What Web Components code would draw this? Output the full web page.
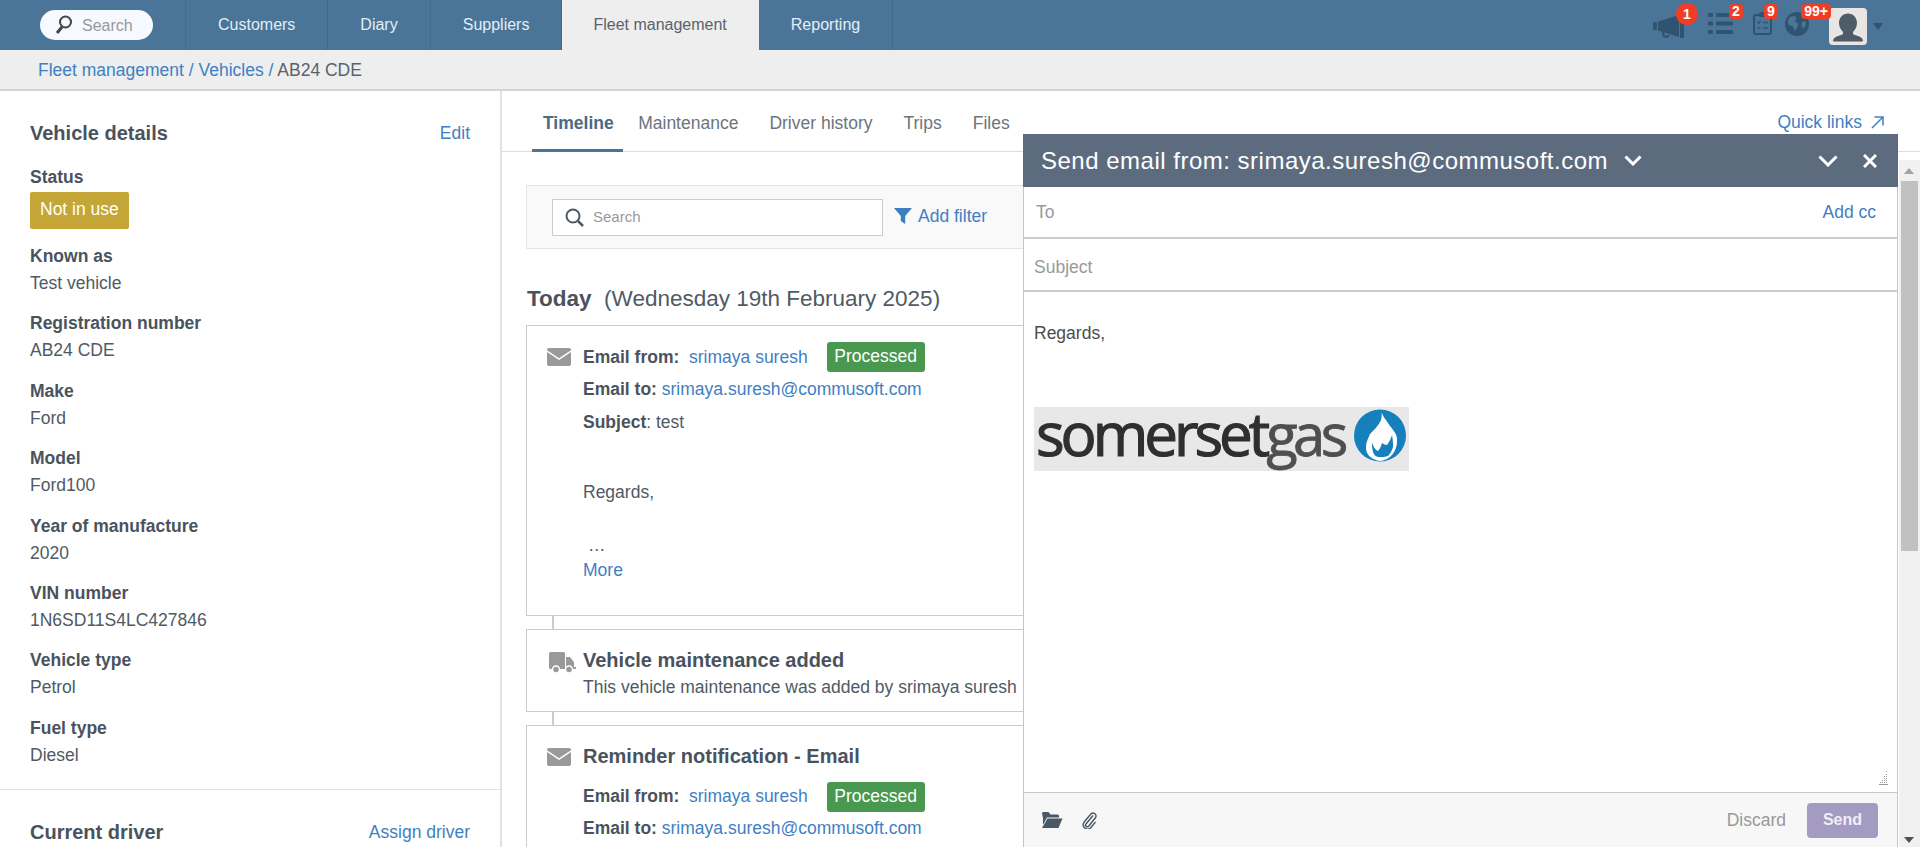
<!DOCTYPE html>
<html lang="en">
<head>
<meta charset="utf-8">
<title>Fleet management</title>
<style>
html,body{margin:0;padding:0;height:100%;overflow:hidden;background:#fff}
body{font:17.5px/1.4 "Liberation Sans",Arial,sans-serif;color:#505a64}
a{color:#3f80c3;text-decoration:none}
b{color:#4a535d}
</style>
</head>
<body>
<x-app>
  <x-top-nav slot="top">
    <x-nav-item>Customers</x-nav-item>
    <x-nav-item>Diary</x-nav-item>
    <x-nav-item>Suppliers</x-nav-item>
    <x-nav-item active>Fleet management</x-nav-item>
    <x-nav-item>Reporting</x-nav-item>
    <x-nav-icon slot="icons" style="--w:31px;--ml:0px;--mt:14px;--bx:23px;--by:-11px;--bw:22px;--bh:22px;--br:11px">1
      <svg slot="icon" width="31" height="24" viewBox="0 0 31 24" fill="#30536f"><path d="M0 8h4v8H0zM5 7.500 26 1v22L5 16.500z"/><rect x="27" y="0" width="4" height="24"/><path d="M9 17.500v2.500a4.200 4.200 0 0 0 8 1.500l-2.300-.8a1.800 1.800 0 0 1-3.400-.7v-2z"/></svg>
    </x-nav-icon>
    <x-nav-icon slot="icons" style="--w:25px;--ml:24px;--mt:12px;--bx:21px;--by:-8px;--bw:14px;--bh:15px;--br:4px">2
      <svg slot="icon" width="25" height="22" viewBox="0 0 25 22" fill="#30536f"><rect y="1" width="5" height="4" rx="1"/><rect x="8" y="1" width="17" height="4" rx="1"/><rect y="9.500" width="5" height="4" rx="1"/><rect x="8" y="9.500" width="17" height="4" rx="1"/><rect y="18" width="5" height="4" rx="1"/><rect x="8" y="18" width="17" height="4" rx="1"/></svg>
    </x-nav-icon>
    <x-nav-icon slot="icons" style="--w:19px;--ml:20px;--mt:11px;--bx:11px;--by:-7px;--bw:14px;--bh:15px;--br:4px">9
      <svg slot="icon" width="19" height="24" viewBox="0 0 19 24" fill="none" stroke="#30536f"><rect x="1" y="4" width="17" height="19" rx="2" stroke-width="2"/><rect x="6" y="1" width="7" height="5" rx="1.500" fill="#30536f" stroke="none"/><path d="M4.500 11l1.200 1.200 2-2.400M10 11.500h5M4.500 17h3M10 17h5" stroke-width="1.500"/></svg>
    </x-nav-icon>
    <x-nav-icon slot="icons" style="--w:24px;--ml:13px;--mt:12px;--bx:16px;--by:-8px;--bw:30px;--bh:15px;--br:4px">99+
      <svg slot="icon" width="24" height="24" viewBox="0 0 24 24"><circle cx="12" cy="12" r="12" fill="#30536f"/><path d="M5 5c3-1 5-1 6 0 1 2-1 3-1 5 2 0 3 1 3 3s-2 4-3 6c-2-2-1-4-3-5-2 0-4-1-4-4 0-2 1-4 2-5zM17 10c1-1 3-1 4 0 0 3-1 5-3 7-1-2-2-5-1-7z" fill="#4a7598"/></svg>
    </x-nav-icon>
    <x-avatar slot="icons"></x-avatar>
  </x-top-nav>
  <x-breadcrumb slot="top"><a href="#">Fleet management / Vehicles /</a> AB24 CDE</x-breadcrumb>

  <x-vehicle-panel slot="side">
    <x-panel-head>Vehicle details<a slot="action" href="#">Edit</a></x-panel-head>
    <x-field status label="Status"><x-status-badge>Not in use</x-status-badge></x-field>
    <x-field label="Known as">Test vehicle</x-field>
    <x-field label="Registration number">AB24 CDE</x-field>
    <x-field label="Make">Ford</x-field>
    <x-field label="Model">Ford100</x-field>
    <x-field label="Year of manufacture">2020</x-field>
    <x-field label="VIN number">1N6SD11S4LC427846</x-field>
    <x-field label="Vehicle type">Petrol</x-field>
    <x-field label="Fuel type">Diesel</x-field>
    <x-panel-head divided>Current driver<a slot="action" href="#">Assign driver</a></x-panel-head>
  </x-vehicle-panel>

  <x-main-view slot="main">
    <x-tab-bar>
      <x-tab active>Timeline</x-tab><x-tab>Maintenance</x-tab><x-tab>Driver history</x-tab><x-tab>Trips</x-tab><x-tab>Files</x-tab>
      <a slot="end" href="#">Quick links</a>
    </x-tab-bar>
    <x-filter-bar></x-filter-bar>
    <x-day-heading><strong>Today</strong>&nbsp; (Wednesday 19th February 2025)</x-day-heading>
    <x-card>
      <x-mail-icon slot="icon"></x-mail-icon>
      <x-row><b>Email from:</b>&nbsp; <a href="#">srimaya suresh</a><x-processed></x-processed></x-row>
      <x-row><b>Email to:</b> <a href="#">srimaya.suresh@commusoft.com</a></x-row>
      <x-row style="margin-top:1px"><b>Subject</b>: test</x-row>
      <x-row style="margin-top:38px">Regards,</x-row>
      <x-row style="margin-top:25px;--lh:24px;padding-left:5px">…</x-row>
      <x-row style="--lh:26px"><a href="#">More</a></x-row>
      <div style="height:32px"></div>
    </x-card>
    <x-link-line></x-link-line>
    <x-card style="--pt:17px">
      <x-truck-icon slot="icon"></x-truck-icon>
      <x-card-title>Vehicle maintenance added</x-card-title>
      <x-row style="--lh:27px">This vehicle maintenance was added by srimaya suresh</x-row>
      <div style="height:10px"></div>
    </x-card>
    <x-link-line></x-link-line>
    <x-card style="--pt:15px">
      <x-mail-icon slot="icon"></x-mail-icon>
      <x-card-title style="--lh:30px">Reminder notification - Email</x-card-title>
      <x-row style="margin-top:9px"><b>Email from:</b>&nbsp; <a href="#">srimaya suresh</a><x-processed></x-processed></x-row>
      <x-row style="margin-top:-1px"><b>Email to:</b> <a href="#">srimaya.suresh@commusoft.com</a></x-row>
      <div style="height:60px"></div>
    </x-card>
  </x-main-view>

  <x-page-scrollbar slot="over"></x-page-scrollbar>
  <x-email-composer slot="over"></x-email-composer>
</x-app>

<script>
function def(name, html, extra){
  const t=document.createElement('template');t.innerHTML=html;
  customElements.define(name,class extends HTMLElement{
    constructor(){super();this.attachShadow({mode:'open'}).appendChild(t.content.cloneNode(true));}
    connectedCallback(){if(extra)extra(this);}
  });
}
def('x-app',`<style>
:host{display:flex;flex-direction:column;height:847px;position:relative;overflow:hidden}
.body{display:flex;flex:1;min-height:0}
</style><slot name="top"></slot><div class="body"><slot name="side"></slot><slot name="main"></slot></div><slot name="over"></slot>`);

def('x-top-nav',`<style>
:host{display:flex;height:50px;background:#4a7598;flex:none}
.s{width:185px;flex:none;border-right:1px solid #41698a;box-sizing:content-box;padding-top:10px}
.pill{margin-left:40px;width:113px;height:30px;border-radius:15px;background:#f6f9ff;display:flex;align-items:center;color:#999;font-size:16px}
.pill span{padding-top:2px}
.pill svg{margin:0 10px 0 15px}
.i{display:flex;margin-left:auto;padding:0 37px 0 0;align-items:flex-start}
</style>
<div class="s"><div class="pill"><svg width="17" height="20" viewBox="0 0 17 20" fill="none" stroke="#444" stroke-width="2"><circle cx="10.500" cy="7" r="5.500"/><path d="M7 12 2 18" stroke-width="3"/></svg><span>Search</span></div></div>
<slot></slot><div class="i"><slot name="icons"></slot></div>`);

def('x-nav-item',`<style>
:host{display:flex;align-items:center;padding:1px 32px 0;border-right:1px solid #41698a;color:#e4edf4;font-size:16px;white-space:nowrap}
:host([active]){background:#eee;color:#59636d;border-right-color:#eee;padding:1px 31px 0}
</style><slot></slot>`);

def('x-nav-icon',`<style>
:host{display:block;position:relative;width:var(--w);margin-left:var(--ml);margin-top:var(--mt);height:26px;font-size:0}
.b{position:absolute;left:var(--bx);top:var(--by);width:var(--bw);height:var(--bh);border-radius:var(--br);background:#f03d26;color:#fff;font:bold 14px/var(--bh) "Liberation Sans",Arial,sans-serif;text-align:center}
</style><slot name="icon"></slot><span class="b"><slot></slot></span>`);

def('x-avatar',`<style>
:host{display:flex;align-items:flex-start;margin-left:20px;margin-top:8px;gap:6px}
.a{width:38px;height:37px;background:#e8e5e3;border-radius:4px;overflow:hidden}
.c{width:0;height:0;margin-top:15px;border:5.500px solid transparent;border-top:7px solid #30536f;border-bottom:0}
</style><div class="a"><svg width="38" height="37" viewBox="0 0 38 37" fill="#4e5b68"><path d="M19 5.500c5 0 9 4 9 9.500 0 4-2 7-4 9v2c3 2 9 2 10 6.500 0 .5-.5 1-1 1H5c-.5 0-1-.5-1-1 1-4.500 7-4.500 10-6.500v-2c-2-2-4-5-4-9 0-5.500 4-9.500 9-9.500z"/></svg></div><div class="c"></div>`);

def('x-breadcrumb',`<style>
:host{display:block;box-sizing:border-box;height:41px;background:#eee;border-bottom:2px solid #d3d6d6;padding:0 0 0 38px;line-height:41px;color:#59636d;flex:none}
</style><slot></slot>`);

def('x-vehicle-panel',`<style>
:host{display:block;width:500px;flex:none;border-right:2px solid #e2e2e2;box-sizing:content-box;margin-right:-1px}
</style><slot></slot>`);

def('x-panel-head',`<style>
:host{display:flex;justify-content:space-between;align-items:center;padding:28px 30px 0;line-height:28px;font-size:20px;font-weight:bold;color:#4a535d}
:host([divided]){border-top:1px solid #e2e2e2;margin-top:6.500px}
::slotted(a){font-size:17.5px;font-weight:normal}
</style><slot></slot><slot name="action"></slot>`);

def('x-field',`<style>
:host{display:block;height:67.400px;padding:0 30px;box-sizing:border-box}
:host([status]){height:65.500px;margin-top:16.500px;margin-bottom:14px}
.l{font-weight:bold;line-height:27px;color:#4a535d}
.v{line-height:27px}
:host([status]) .v{padding-top:1.500px;line-height:0}
</style><div class="l"></div><div class="v"><slot></slot></div>`,el=>{el.shadowRoot.querySelector('.l').textContent=el.getAttribute('label')});

def('x-status-badge',`<style>
:host{display:inline-block;background:#c4a636;color:#fff;height:37px;line-height:34px;padding:0 10px;border-radius:2px}
</style><slot></slot>`);

def('x-main-view',`<style>
:host{display:block;flex:1;min-width:0;padding:0 25px 0 0;box-sizing:border-box}
</style><slot></slot>`);

def('x-tab-bar',`<style>
:host{display:flex;box-sizing:border-box;height:61px;margin-right:-25px;border-bottom:1px solid #ddd;padding-left:31px}
.e{margin-left:auto;padding:21px 36px 0 0;line-height:20px;display:flex;gap:9px;align-items:center;height:20px}
</style><slot></slot><div class="e"><slot name="end"></slot><svg width="13" height="13" viewBox="0 0 13 13" fill="none" stroke="#3f80c3" stroke-width="1.500"><path d="M1 12 12 1M3.500 1H12v8.500"/></svg></div>`);

def('x-tab',`<style>
:host{display:block;box-sizing:border-box;height:61px;padding:21.500px 15.500px 0;line-height:20px;color:#6b747d;white-space:nowrap}
:host([active]){font-weight:bold;color:#4a6a85;border-bottom:3px solid #4a7598;padding:21.500px 9px 0 11px}
</style><slot></slot>`);

def('x-filter-bar',`<style>
:host{display:flex;align-items:center;box-sizing:border-box;height:64px;margin:33px 0 0 25px;background:#f9f9f9;border:1px solid #e5e5e5;padding-left:25px}
.in{width:331px;height:37px;box-sizing:border-box;background:#fff;border:1px solid #ccc;display:flex;align-items:center;color:#999;font-size:15px;padding-left:12px;gap:9px}
.in span{margin-top:-2px}
.f{display:flex;align-items:center;margin-left:11px;color:#3f80c3;gap:6px;margin-top:-2px}
</style><div class="in"><svg width="19" height="19" viewBox="0 0 19 19" fill="none" stroke="#4d5a66" stroke-width="2"><circle cx="8" cy="8" r="6.500"/><path d="M13 13l5 5" stroke-width="2.500"/></svg><span>Search</span></div>
<div class="f"><svg width="18" height="16" viewBox="0 0 18 16" fill="#3a80c1"><path d="M0 0h18l-6.800 8v8l-4.400-3V8z"/></svg><span>Add filter</span></div>`);

def('x-day-heading',`<style>
:host{display:block;margin:35px 0 11px 26px;line-height:30px;font-size:22.500px;color:#505a64;white-space:nowrap}
::slotted(strong){color:#4a535d}
</style><slot></slot>`);

def('x-card',`<style>
:host{display:flex;margin-left:25px;border:1px solid #ccc;box-sizing:border-box;padding-left:20px;padding-top:var(--pt,15px);background:#fff}
.ic{width:36px;flex:none}
.c{flex:1;min-width:0}
</style><div class="ic"><slot name="icon"></slot></div><div class="c"><slot></slot></div>`);

def('x-row',`<style>
:host{display:block;line-height:var(--lh,32px);white-space:nowrap}
</style><slot></slot>`);

def('x-card-title',`<style>
:host{display:block;line-height:var(--lh,27px);font-size:20px;font-weight:bold;color:#4a535d;white-space:nowrap}
</style><slot></slot>`);

def('x-processed',`<style>
:host{display:inline-block;height:30px;line-height:28px;width:98px;text-align:center;margin-left:19px;background:#48994f;color:#fff;border-radius:3px;vertical-align:middle;position:relative;top:-1px}
</style>Processed`);

def('x-mail-icon',`<style>:host{display:block;width:24px;height:18px;padding-top:7px}</style>
<svg width="24" height="18" viewBox="0 0 24 18" style="display:block"><rect width="24" height="18" rx="2" fill="#999"/><path d="M0 3l12 8 12-8" fill="none" stroke="#fff" stroke-width="1.500"/></svg>`);

def('x-truck-icon',`<style>:host{display:block;width:27px;height:22px;padding:5px 0 0 2px}</style>
<svg width="27" height="22" viewBox="0 0 27 22" style="display:block" fill="#999"><path d="M1.500 0h13a1.500 1.500 0 0 1 1.500 1.500V17H1.500A1.500 1.500 0 0 1 0 15.500v-14A1.500 1.500 0 0 1 1.500 0z"/><path d="M17 5h4l4 5v7h-8z"/><rect x="25" y="15" width="2" height="2"/><circle cx="7" cy="17.500" r="3.500" stroke="#fff" stroke-width="1.500"/><circle cx="20" cy="17.500" r="3.500" stroke="#fff" stroke-width="1.500"/></svg>`);

def('x-link-line',`<style>:host{display:block;height:13px;width:2px;background:#ccc;margin-left:51px}</style>`);

def('x-page-scrollbar',`<style>
:host{position:absolute;left:1899px;top:160px;width:21px;height:687px;background:#f1f1f1;display:block}
.u,.d{position:absolute;left:5px;width:0;height:0;border:5px solid transparent}
.u{top:8px;border-top:0;border-bottom:6px solid #a3a3a3}
.d{bottom:4px;border-bottom:0;border-top:6px solid #505050}
.t{position:absolute;left:2px;right:2px;top:21px;height:370px;background:#c1c1c1}
</style><div class="u"></div><div class="t"></div><div class="d"></div>`);

def('x-email-composer',`<style>
:host{position:absolute;left:1023px;top:134px;width:875px;height:713px;display:flex;flex-direction:column;background:#fff;border-left:1px solid #c6c6c6;border-right:1px solid #c6c6c6;box-sizing:border-box;color:#505a64}
.h{height:53px;margin:0 -1px;background:#5d6b7f;color:#fff;display:flex;align-items:center;padding-left:18px;font-size:24px;letter-spacing:.5px;flex:none}
.h svg{flex:none}
.sp{margin-left:auto}
.r{display:flex;align-items:center;justify-content:space-between;box-sizing:border-box;border-bottom:2px solid #ccc;color:#999;flex:none}
.to{height:52px;padding:0 21px 0 12px}
.su{height:53px;padding:5px 10px 0 10px}
.to a{color:#3f80c3;text-decoration:none}
.b{flex:1;position:relative;padding:28px 0 0 10px;min-height:0}
.reg{line-height:26px;color:#4d4d4d}
.logo{display:block;margin-top:61px;width:375px;height:64px;background:#e8e8e8;position:relative}
.lt{height:64px;font:400 60px/64px "Open Sans",sans-serif;letter-spacing:-4px;color:#2f2f2f;-webkit-text-stroke:1.200px #2f2f2f;padding-left:2px;white-space:nowrap;transform:translateY(-6px)}
.lt span{color:#4f4f4f;-webkit-text-stroke:.8px #4f4f4f;font-size:58px;letter-spacing:-4.500px}
.logo svg{position:absolute;left:320px;top:2px}
.grip{position:absolute;right:9px;bottom:7px}
.f{height:55px;background:#f7f7f7;border-top:1px solid #c4c9ce;box-sizing:border-box;display:flex;align-items:center;padding:0 19px 0 18px;flex:none}
.send{width:71px;height:35px;border-radius:4px;background:#a49bc3;color:#f0eef6;font-weight:bold;display:flex;align-items:center;justify-content:center;margin-left:21px;font-size:16px}
.dis{color:#999;margin-left:auto}
.f svg+svg{margin-left:18px}
</style>
<div class="h"><span>Send email from: srimaya.suresh@commusoft.com</span>
<svg style="margin-left:16px" width="18" height="11" viewBox="0 0 18 11" fill="none" stroke="#fff" stroke-width="3"><path d="M1.500 1.500 9 9l7.500-7.500"/></svg>
<svg class="sp" width="20" height="12" viewBox="0 0 20 12" fill="none" stroke="#fff" stroke-width="3"><path d="M1.500 1.500 10 10l8.500-8.500"/></svg>
<svg style="margin:0 21px 0 25px" width="14" height="14" viewBox="0 0 14 14" fill="none" stroke="#fff" stroke-width="3"><path d="M1 1l12 12M13 1 1 13"/></svg></div>
<div class="r to"><span>To</span><a href="#">Add cc</a></div>
<div class="r su"><span>Subject</span></div>
<div class="b"><div class="reg">Regards,</div>
<div class="logo"><div class="lt">somerset<span>gas</span></div>
<svg width="52" height="54" viewBox="0 0 52 54"><circle cx="26" cy="26.500" r="26" fill="#1580bb"/><path d="M27 1c1 6 6 11 9 16 4 5 8 9 7 16 0 8-6 18-17 19-8-1-14-6-14-13 0-6 2-9 4-14 4-4 9-9 11-14 1-4 1-7 0-10z" fill="#fff"/><path d="M18 33c1 4 3 8 6 9 2-2 3-5 4-8 2 1 3 2 5 2 2-3 4-6 5-10 1 5 1 9 1 12-1 4-3 7-5 9-3 1-5 1-8 1-4 0-6-2-7-5-1-3-1-7-1-10z" fill="#1580bb"/></svg></div>
<svg class="grip" width="9" height="14" viewBox="0 0 9 14" fill="#999"><path d="M7 0h1v1H7zM7 3h1v1H7zM5 5h1v1H5zM7 5h1v1H7zM5 7h1v1H5zM7 7h1v1H7zM3 9h1v1H3zM5 9h1v1H5zM7 9h1v1H7zM1 11h1v1H1zM3 11h1v1H3zM5 11h1v1H5zM7 11h1v1H7zM0 13h9v1H0z"/></svg></div>
<div class="f"><svg width="21" height="16" viewBox="0 0 21 16" fill="#4a5866"><path d="M0 1.500A1.500 1.500 0 0 1 1.500 0h5l2 2.500h7A1.500 1.500 0 0 1 17 4v1.500H5L1.500 12 1 12.500V6z" /><path d="M5.500 6.500H20.500L16.500 16H0z"/></svg>
<svg width="17" height="17" viewBox="0 0 17 17" fill="none" stroke="#4a5866" stroke-width="1.400"><path d="M12 3.500 5 12a1.700 1.700 0 0 0 2.600 2.200l7-8.700A3 3 0 0 0 10 1.800L2.800 10.500a4.400 4.400 0 0 0 6.700 5.500l5-6"/></svg>
<span class="dis">Discard</span><div class="send">Send</div></div>`);
</script>
</body>
</html>
